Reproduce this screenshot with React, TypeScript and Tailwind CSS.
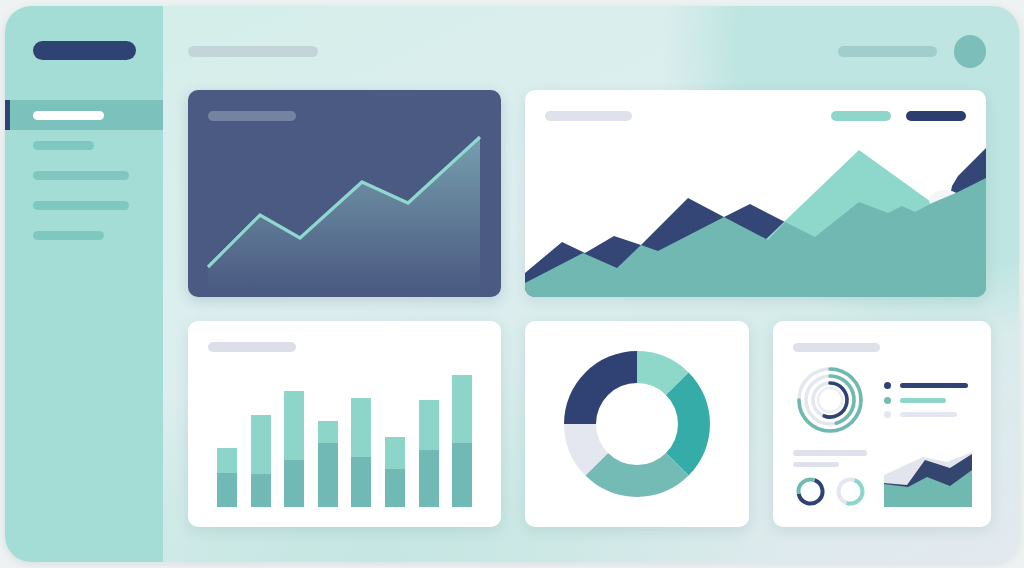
import React from 'react';

const NAVY = '#2f4273';
const TEAL_LIGHT = '#8ed8ca';
const TEAL = '#35aca8';
const TEAL_MID = '#74bbb6';
const GRAY = '#e4e7ef';

// point on a circle, angle measured clockwise from 12 o'clock
const pt = (cx: number, cy: number, r: number, a: number) => {
  const rad = (a * Math.PI) / 180;
  return [cx + r * Math.sin(rad), cy - r * Math.cos(rad)];
};

const arc = (cx: number, cy: number, r: number, a0: number, a1: number) => {
  const [x0, y0] = pt(cx, cy, r, a0);
  const [x1, y1] = pt(cx, cy, r, a1);
  const large = a1 - a0 > 180 ? 1 : 0;
  return `M${x0} ${y0} A${r} ${r} 0 ${large} 1 ${x1} ${y1}`;
};

const sector = (cx: number, cy: number, ro: number, ri: number, a0: number, a1: number) => {
  const [x0, y0] = pt(cx, cy, ro, a0);
  const [x1, y1] = pt(cx, cy, ro, a1);
  const [x2, y2] = pt(cx, cy, ri, a1);
  const [x3, y3] = pt(cx, cy, ri, a0);
  const large = a1 - a0 > 180 ? 1 : 0;
  return `M${x0} ${y0} A${ro} ${ro} 0 ${large} 1 ${x1} ${y1} L${x2} ${y2} A${ri} ${ri} 0 ${large} 0 ${x3} ${y3} Z`;
};

const bars = [
  { total: 59, base: 34 },
  { total: 92, base: 33 },
  { total: 116, base: 47 },
  { total: 86, base: 64 },
  { total: 109, base: 50 },
  { total: 70, base: 38 },
  { total: 107, base: 57 },
  { total: 132, base: 64 },
];

const Sidebar = () => (
  <div className="w-[158px] shrink-0 bg-[#a3ddd5] pt-[35px]">
    <div className="ml-[28px] h-[19px] w-[103px] rounded-full bg-[#2f4274]" />
    <div className="mt-[40px]">
      <div className="flex h-[30px] items-center bg-[#7cc1bb]">
        <div className="h-full w-[5px] bg-[#2e4470]" />
        <div className="ml-[23px] h-[9px] w-[71px] rounded-full bg-white" />
      </div>
      {[61, 96, 96, 71].map((w, i) => (
        <div key={i} className="flex h-[30px] items-center pl-[28px]">
          <div className="h-[9px] rounded-full bg-[#7fc8bf]" style={{ width: w }} />
        </div>
      ))}
    </div>
  </div>
);

const TrendCard = () => (
  <div className="flex h-[207px] w-[313px] flex-col overflow-hidden rounded-[10px] bg-[#4b5a82] shadow-[0_4px_14px_rgba(40,70,100,0.18)]">
    <div className="ml-[20px] mt-[21px] h-[10px] w-[88px] rounded-full bg-[#7583a3]" />
    <svg className="mt-[9px] block" width="313" height="167" viewBox="0 40 313 167">
      <defs>
        <linearGradient id="trendFill" x1="0" y1="0" x2="0" y2="1">
          <stop offset="0%" stopColor="#9ad7d0" stopOpacity="0.55" />
          <stop offset="100%" stopColor="#9ad7d0" stopOpacity="0" />
        </linearGradient>
      </defs>
      <polygon
        points="20,177 72,125 112,148 174,92 220,113 292,47 292,200 20,200"
        fill="url(#trendFill)"
      />
      <polyline
        points="20,177 72,125 112,148 174,92 220,113 292,47"
        fill="none"
        stroke="#8fd8cf"
        strokeWidth="3.2"
        strokeLinejoin="miter"
      />
    </svg>
  </div>
);

const AreaCard = () => (
  <div className="flex h-[207px] w-[461px] flex-col overflow-hidden rounded-[10px] bg-white shadow-[0_4px_14px_rgba(40,90,100,0.12)]">
    <div className="mt-[21px] flex items-center px-[20px]">
      <div className="h-[10px] w-[87px] rounded-full bg-[#dfe2ec]" />
      <div className="ml-auto h-[10px] w-[60px] rounded-full bg-[#8fd6ca]" />
      <div className="ml-[15px] h-[10px] w-[60px] rounded-full bg-[#2d3e6e]" />
    </div>
    <svg className="mt-[9px] block" width="461" height="167" viewBox="0 40 461 167">
      <polygon
        points="0,183 37,152 60,163 89,146 116,155 163,108 199,127 225,114 260,132 330,170 420,130 427,96 433,86 461,58 461,207 0,207"
        fill="#344675"
      />
      <polygon points="238,152 334,60 420,122 461,146 461,207 238,207" fill="#8ed8cb" />
      <ellipse cx="420" cy="110" rx="16" ry="10" fill="#f3f6f8" />
      <polygon
        points="0,193 58,163 92,178 116,155 133,161 199,127 243,150 260,132 290,147 334,112 363,123 377,116 390,122 407,113 433,102 461,88 461,207 0,207"
        fill="#71b8b3"
      />
    </svg>
  </div>
);

const BarCard = () => (
  <div className="flex h-[206px] w-[313px] flex-col rounded-[10px] bg-white shadow-[0_4px_14px_rgba(40,90,100,0.12)]">
    <div className="ml-[20px] mt-[21px] h-[10px] w-[88px] rounded-full bg-[#dcdee9]" />
    <div className="ml-[29px] mt-auto mb-[20px] flex items-end gap-[13.6px]">
      {bars.map((b, i) => (
        <div key={i} className="flex w-[20px] flex-col">
          <div className="bg-[#8dd5c8]" style={{ height: b.total - b.base }} />
          <div className="bg-[#70b9b4]" style={{ height: b.base }} />
        </div>
      ))}
    </div>
  </div>
);

const DonutCard = () => (
  <div className="flex h-[206px] w-[224px] items-center justify-center rounded-[10px] bg-white shadow-[0_4px_14px_rgba(40,90,100,0.12)]">
    <svg width="150" height="150" viewBox="0 0 150 150">
      <path d={sector(75, 75, 73, 41, 270, 360)} fill={NAVY} />
      <path d={sector(75, 75, 73, 41, 0, 45)} fill={TEAL_LIGHT} />
      <path d={sector(75, 75, 73, 41, 45, 135)} fill={TEAL} />
      <path d={sector(75, 75, 73, 41, 135, 225)} fill={TEAL_MID} />
      <path d={sector(75, 75, 73, 41, 225, 270)} fill={GRAY} />
    </svg>
  </div>
);

const ring = (r: number, sw: number, to: number, color: string) => (
  <g>
    <circle cx="35" cy="35" r={r} fill="none" stroke={GRAY} strokeWidth={sw} />
    <path d={arc(35, 35, r, 0, to)} fill="none" stroke={color} strokeWidth={sw} strokeLinecap="round" />
  </g>
);

const MiniDonut = ({ parts }: { parts: { a0: number; a1: number; c: string }[] }) => (
  <svg width="31" height="31" viewBox="0 0 31 31">
    {parts.map((p, i) => (
      <path key={i} d={arc(15.5, 15.5, 12, p.a0, p.a1)} fill="none" stroke={p.c} strokeWidth="4" />
    ))}
  </svg>
);

const SummaryCard = () => (
  <div className="flex h-[206px] w-[218px] flex-col rounded-[10px] bg-white pl-[20px] shadow-[0_4px_14px_rgba(40,90,100,0.12)]">
    <div className="mt-[22px] h-[9px] w-[87px] rounded-full bg-[#dfe1ea]" />
    <div className="mt-[13px] flex h-[70px] items-center">
      <svg className="ml-[2px]" width="70" height="70" viewBox="0 0 70 70">
        {ring(31, 3.6, 270, '#6fb9b1')}
        {ring(24, 3.6, 165, '#6fb9b1')}
        <circle cx="35" cy="35" r="12" fill="none" stroke="#eceef3" strokeWidth="2.5" />
        {ring(17, 3.6, 200, NAVY)}
      </svg>
      <div className="ml-[19px] flex flex-col gap-[7.5px]">
        {[
          { c: NAVY, w: 68 },
          { c: '#8fd6ca', w: 46 },
          { c: GRAY, w: 57 },
        ].map((l, i) => (
          <div key={i} className="flex h-[7px] items-center">
            <div className="h-[7px] w-[7px] rounded-full" style={{ background: i === 1 ? '#72bcb3' : l.c }} />
            <div className="ml-[9px] h-[5px] rounded-full" style={{ width: l.w, background: l.c }} />
          </div>
        ))}
      </div>
    </div>
    <div className="mt-[15px] flex">
      <div className="w-[74px]">
        <div className="h-[6px] w-[74px] rounded-full bg-[#dfe1ea]" />
        <div className="mt-[6px] h-[5px] w-[46px] rounded-full bg-[#dfe1ea]" />
        <div className="ml-[2px] mt-[9px] flex gap-[9px]">
          <MiniDonut
            parts={[
              { a0: 20, a1: 260, c: NAVY },
              { a0: 260, a1: 380, c: '#6fb9b1' },
            ]}
          />
          <MiniDonut
            parts={[
              { a0: 200, a1: 380, c: GRAY },
              { a0: 20, a1: 200, c: '#8fd6ca' },
            ]}
          />
        </div>
      </div>
      <svg className="ml-[17px] mt-[2px]" width="88" height="55" viewBox="111 131 88 55">
        <polygon points="111,154 150,136 174,141 199,131 199,186 111,186" fill="#e3e5ee" />
        <polygon points="111,162 134,164 152,139 177,147 199,133 199,186 111,186" fill="#34466f" />
        <polygon points="111,163 135,166 154,156 177,165 199,149 199,186 111,186" fill="#6fb9b1" />
      </svg>
    </div>
  </div>
);

export default function App() {
  return (
    <div className="h-[568px] w-[1024px] overflow-hidden bg-[#eef2f3] pl-[5px] pt-[6px]">
      <div className="flex h-[556px] w-[1014px] overflow-hidden rounded-[26px] shadow-[0_2px_8px_rgba(60,90,100,0.12)]">
        <Sidebar />
        <div className="min-w-0 flex-1 bg-[radial-gradient(ellipse_45%_70%_at_92%_8%,#bee5e1_0%,#bee5e1_55%,rgba(190,229,225,0)_75%),radial-gradient(ellipse_60%_45%_at_25%_100%,#c4e6e2_0%,rgba(196,230,226,0)_80%),linear-gradient(155deg,#d5eeea_0%,#deeef0_40%,#d6ecea_65%,#e3e9ef_100%)] pl-[25px] pr-[28px] pt-[28px]">
          <div className="mr-[5px] flex h-[34px] items-center">
            <div className="h-[11px] w-[130px] rounded-full bg-[#c3d5d9]" />
            <div className="ml-auto h-[11px] w-[99px] rounded-full bg-[#a1cdcc]" />
            <div className="ml-[17px] h-[33px] w-[32px] rounded-full bg-[#7cbfba]" />
          </div>
          <div className="mt-[22px] flex gap-[24px]">
            <TrendCard />
            <AreaCard />
          </div>
          <div className="mt-[24px] flex gap-[24px]">
            <BarCard />
            <DonutCard />
            <SummaryCard />
          </div>
        </div>
      </div>
    </div>
  );
}
